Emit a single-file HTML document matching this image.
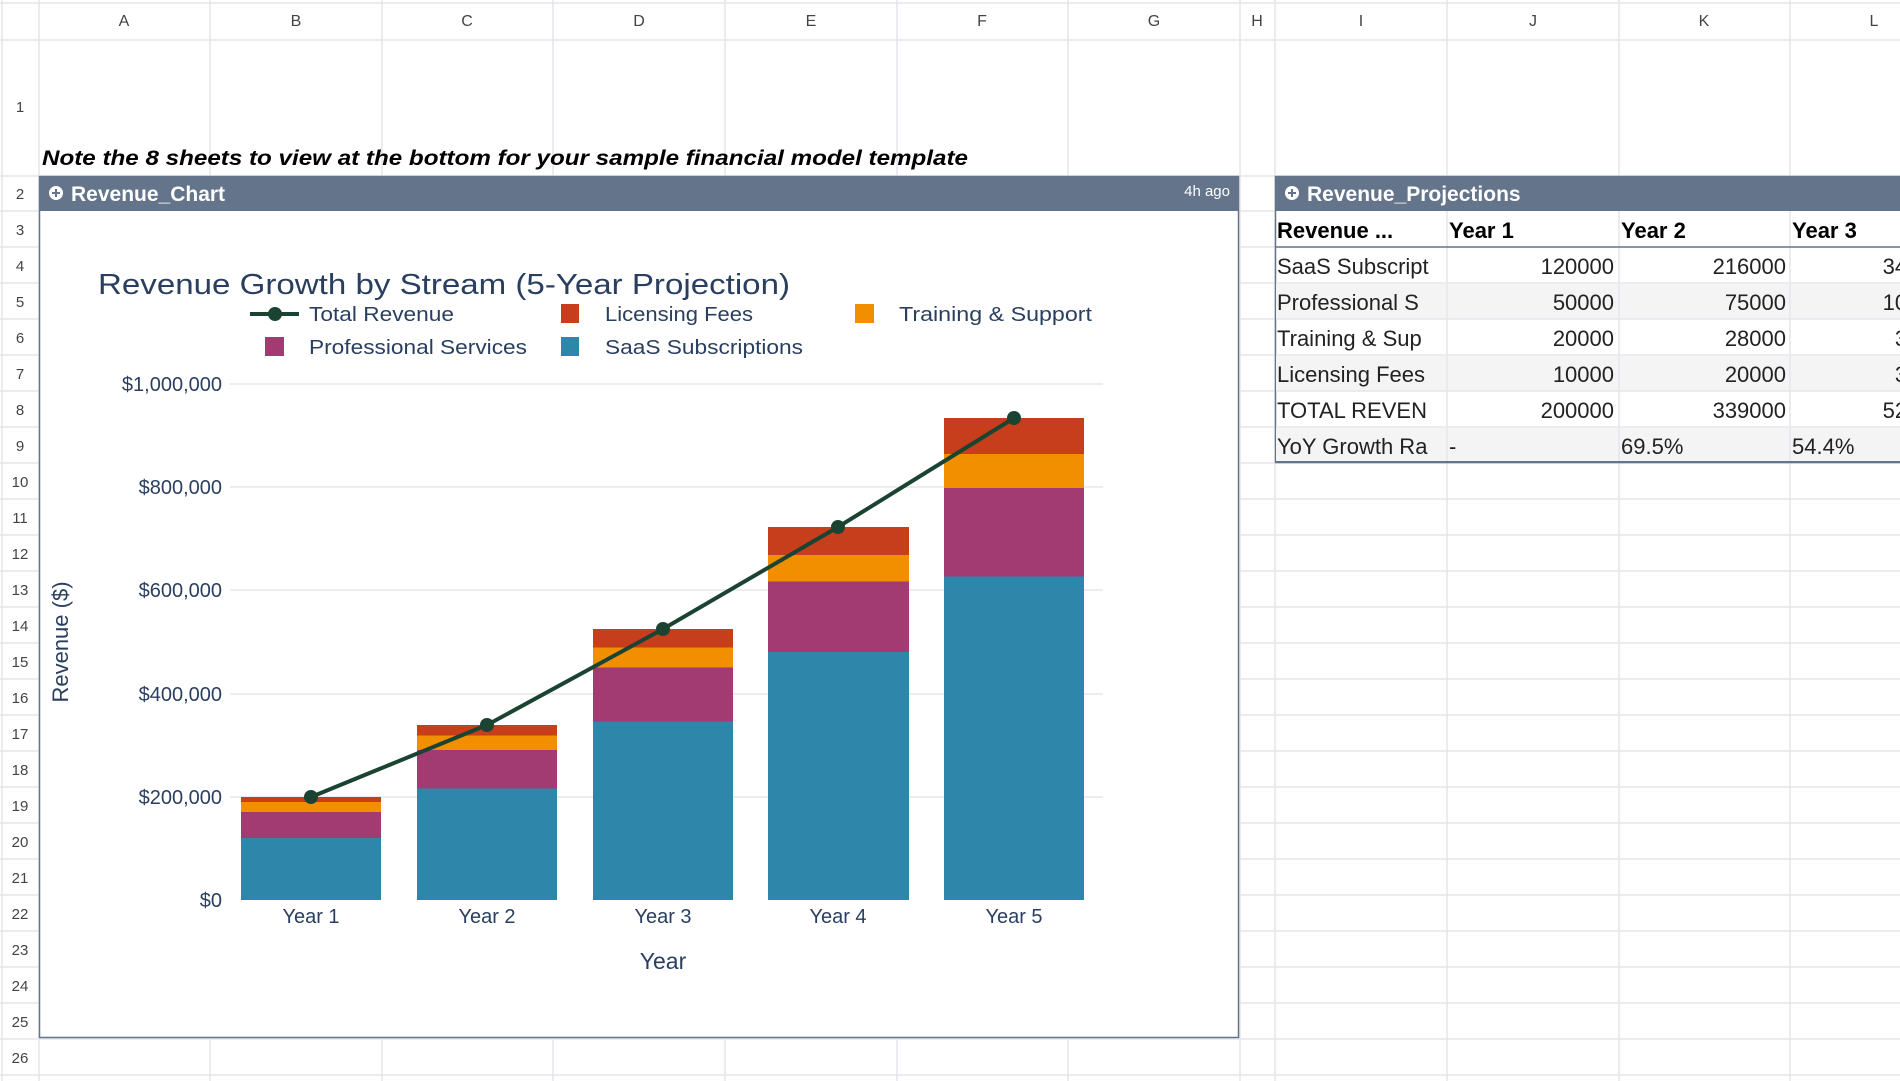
<!DOCTYPE html>
<html><head><meta charset="utf-8"><style>
html,body{margin:0;padding:0;background:#fff;width:1900px;height:1081px;overflow:hidden}
svg{display:block}
text{font-family:"Liberation Sans",sans-serif}
</style></head><body>
<svg width="1900" height="1081" viewBox="0 0 1900 1081" xmlns="http://www.w3.org/2000/svg">
<rect width="1900" height="1081" fill="#fff"/>
<g stroke="#e3e6eb" stroke-width="1.5">
<line x1="0" y1="3" x2="1900" y2="3"/>
<line x1="0" y1="40" x2="1900" y2="40"/>
<line x1="0" y1="176" x2="1900" y2="176"/>
<line x1="0" y1="211" x2="1900" y2="211"/>
<line x1="0" y1="247" x2="1900" y2="247"/><line x1="0" y1="283" x2="1900" y2="283"/><line x1="0" y1="319" x2="1900" y2="319"/><line x1="0" y1="355" x2="1900" y2="355"/><line x1="0" y1="391" x2="1900" y2="391"/><line x1="0" y1="427" x2="1900" y2="427"/><line x1="0" y1="463" x2="1900" y2="463"/><line x1="0" y1="499" x2="1900" y2="499"/><line x1="0" y1="535" x2="1900" y2="535"/><line x1="0" y1="571" x2="1900" y2="571"/><line x1="0" y1="607" x2="1900" y2="607"/><line x1="0" y1="643" x2="1900" y2="643"/><line x1="0" y1="679" x2="1900" y2="679"/><line x1="0" y1="715" x2="1900" y2="715"/><line x1="0" y1="751" x2="1900" y2="751"/><line x1="0" y1="787" x2="1900" y2="787"/><line x1="0" y1="823" x2="1900" y2="823"/><line x1="0" y1="859" x2="1900" y2="859"/><line x1="0" y1="895" x2="1900" y2="895"/><line x1="0" y1="931" x2="1900" y2="931"/><line x1="0" y1="967" x2="1900" y2="967"/><line x1="0" y1="1003" x2="1900" y2="1003"/><line x1="0" y1="1039" x2="1900" y2="1039"/><line x1="0" y1="1075" x2="1900" y2="1075"/>
<line x1="2" y1="0" x2="2" y2="1081"/>
<line x1="39" y1="0" x2="39" y2="1081"/><line x1="210" y1="0" x2="210" y2="1081"/><line x1="382" y1="0" x2="382" y2="1081"/><line x1="553" y1="0" x2="553" y2="1081"/><line x1="725" y1="0" x2="725" y2="1081"/><line x1="897" y1="0" x2="897" y2="1081"/><line x1="1068" y1="0" x2="1068" y2="1081"/><line x1="1240" y1="0" x2="1240" y2="1081"/><line x1="1275" y1="0" x2="1275" y2="1081"/><line x1="1447" y1="0" x2="1447" y2="1081"/><line x1="1619" y1="0" x2="1619" y2="1081"/><line x1="1790" y1="0" x2="1790" y2="1081"/>
</g>
<g font-size="16" fill="#444" text-anchor="middle">
<text x="124" y="26">A</text><text x="296" y="26">B</text><text x="467" y="26">C</text><text x="639" y="26">D</text><text x="811" y="26">E</text><text x="982" y="26">F</text><text x="1154" y="26">G</text><text x="1257" y="26">H</text><text x="1361" y="26">I</text><text x="1533" y="26">J</text><text x="1704" y="26">K</text><text x="1874" y="26">L</text>
</g>
<g font-size="15" fill="#444" text-anchor="middle">
<text x="20" y="112">1</text><text x="20" y="199">2</text>
<text x="20" y="235">3</text><text x="20" y="271">4</text><text x="20" y="307">5</text><text x="20" y="343">6</text><text x="20" y="379">7</text><text x="20" y="415">8</text><text x="20" y="451">9</text><text x="20" y="487">10</text><text x="20" y="523">11</text><text x="20" y="559">12</text><text x="20" y="595">13</text><text x="20" y="631">14</text><text x="20" y="667">15</text><text x="20" y="703">16</text><text x="20" y="739">17</text><text x="20" y="775">18</text><text x="20" y="811">19</text><text x="20" y="847">20</text><text x="20" y="883">21</text><text x="20" y="919">22</text><text x="20" y="955">23</text><text x="20" y="991">24</text><text x="20" y="1027">25</text><text x="20" y="1063">26</text>
</g>
<text x="42" y="165" font-size="21.5" font-weight="bold" font-style="italic" fill="#000" textLength="926" lengthAdjust="spacingAndGlyphs">Note the 8 sheets to view at the bottom for your sample financial model template</text>

<rect x="39.5" y="176.5" width="1199" height="861" fill="#fff" stroke="#64748b" stroke-width="1.5"/>
<rect x="39" y="176" width="1200" height="35" fill="#64748b"/>
<circle cx="56" cy="193" r="7" fill="#fff"/><path d="M52 193h8M56 189v8" stroke="#64748b" stroke-width="2"/>
<text x="71" y="201" font-size="21" font-weight="bold" fill="#fff">Revenue_Chart</text>
<text x="1230" y="196" font-size="15" fill="#fff" text-anchor="end">4h ago</text>

<text x="98" y="294" font-size="29" fill="#2a3f5f" textLength="692" lengthAdjust="spacingAndGlyphs">Revenue Growth by Stream (5-Year Projection)</text>
<line x1="250" y1="314" x2="299" y2="314" stroke="#1b4332" stroke-width="4"/><circle cx="275" cy="314" r="7" fill="#1b4332"/>
<g font-size="20" fill="#2a3f5f">
<text x="309" y="321" textLength="145" lengthAdjust="spacingAndGlyphs">Total Revenue</text>
<rect x="561" y="304" width="18" height="19" fill="#c73e1d"/><text x="605" y="321" textLength="148" lengthAdjust="spacingAndGlyphs">Licensing Fees</text>
<rect x="855" y="304" width="19" height="19" fill="#f18f01"/><text x="899" y="321" textLength="193" lengthAdjust="spacingAndGlyphs">Training &amp; Support</text>
<rect x="265" y="337" width="19" height="19" fill="#a23b72"/><text x="309" y="354" textLength="218" lengthAdjust="spacingAndGlyphs">Professional Services</text>
<rect x="561" y="337" width="18" height="19" fill="#2e86ab"/><text x="605" y="354" textLength="198" lengthAdjust="spacingAndGlyphs">SaaS Subscriptions</text>
</g>
<g stroke="#e5e7eb" stroke-width="1.5">
<line x1="230" y1="384" x2="1103" y2="384"/><line x1="230" y1="487" x2="1103" y2="487"/><line x1="230" y1="590" x2="1103" y2="590"/><line x1="230" y1="694" x2="1103" y2="694"/><line x1="230" y1="797" x2="1103" y2="797"/>
</g>
<g font-size="20" fill="#2a3f5f" text-anchor="end">
<text x="222" y="391">$1,000,000</text><text x="222" y="494">$800,000</text><text x="222" y="597">$600,000</text><text x="222" y="701">$400,000</text><text x="222" y="804">$200,000</text><text x="222" y="907">$0</text>
</g>
<text transform="translate(68,642) rotate(-90)" font-size="22" fill="#2a3f5f" text-anchor="middle">Revenue ($)</text>
<g>
<rect x="241" y="838" width="140" height="62" fill="#2e86ab"/><rect x="241" y="812" width="140" height="26" fill="#a23b72"/><rect x="241" y="802" width="140" height="10" fill="#f18f01"/><rect x="241" y="797" width="140" height="5" fill="#c73e1d"/>
<rect x="417" y="788.5" width="140" height="111.5" fill="#2e86ab"/><rect x="417" y="750" width="140" height="38.5" fill="#a23b72"/><rect x="417" y="735.5" width="140" height="14.5" fill="#f18f01"/><rect x="417" y="725" width="140" height="10.5" fill="#c73e1d"/>
<rect x="593" y="721.5" width="140" height="178.5" fill="#2e86ab"/><rect x="593" y="667.5" width="140" height="54" fill="#a23b72"/><rect x="593" y="647.5" width="140" height="20" fill="#f18f01"/><rect x="593" y="629" width="140" height="18.5" fill="#c73e1d"/>
<rect x="768" y="652" width="141" height="248" fill="#2e86ab"/><rect x="768" y="581.5" width="141" height="70.5" fill="#a23b72"/><rect x="768" y="555" width="141" height="26.5" fill="#f18f01"/><rect x="768" y="527" width="141" height="28" fill="#c73e1d"/>
<rect x="944" y="576.5" width="140" height="323.5" fill="#2e86ab"/><rect x="944" y="488" width="140" height="88.5" fill="#a23b72"/><rect x="944" y="454" width="140" height="34" fill="#f18f01"/><rect x="944" y="418" width="140" height="36" fill="#c73e1d"/>
</g>
<polyline points="311,797 487,725 663,629 838,527 1014,418" fill="none" stroke="#1b4332" stroke-width="4"/>
<g fill="#1b4332"><circle cx="311" cy="797" r="7"/><circle cx="487" cy="725" r="7"/><circle cx="663" cy="629" r="7"/><circle cx="838" cy="527" r="7"/><circle cx="1014" cy="418" r="7"/></g>
<g font-size="20" fill="#2a3f5f" text-anchor="middle">
<text x="311" y="923">Year 1</text><text x="487" y="923">Year 2</text><text x="663" y="923">Year 3</text><text x="838" y="923">Year 4</text><text x="1014" y="923">Year 5</text>
</g>
<text x="663" y="969" font-size="23" fill="#2a3f5f" text-anchor="middle">Year</text>

<rect x="1275.5" y="176.5" width="630" height="286" fill="#fff" stroke="#64748b" stroke-width="1.5"/>
<rect x="1275" y="176" width="625" height="35" fill="#64748b"/>
<circle cx="1292" cy="193" r="7" fill="#fff"/><path d="M1288 193h8M1292 189v8" stroke="#64748b" stroke-width="2"/>
<text x="1307" y="201" font-size="21" font-weight="bold" fill="#fff">Revenue_Projections</text>
<rect x="1276" y="283" width="624" height="36" fill="#f4f4f4"/>
<rect x="1276" y="355" width="624" height="36" fill="#f4f4f4"/>
<rect x="1276" y="427" width="624" height="35" fill="#f4f4f4"/>
<g stroke="#e3e6eb" stroke-width="1.5">
<line x1="1276" y1="283" x2="1900" y2="283"/><line x1="1276" y1="319" x2="1900" y2="319"/><line x1="1276" y1="355" x2="1900" y2="355"/><line x1="1276" y1="391" x2="1900" y2="391"/><line x1="1276" y1="427" x2="1900" y2="427"/>
<line x1="1447" y1="211" x2="1447" y2="462"/><line x1="1619" y1="211" x2="1619" y2="462"/><line x1="1790" y1="211" x2="1790" y2="462"/>
</g>
<line x1="1276" y1="247" x2="1900" y2="247" stroke="#64748b" stroke-width="1.5"/>
<line x1="1276" y1="462" x2="1900" y2="462" stroke="#64748b" stroke-width="2"/>
<g font-size="22" font-weight="bold" fill="#000">
<text x="1277" y="238">Revenue ...</text><text x="1449" y="238">Year 1</text><text x="1621" y="238">Year 2</text><text x="1792" y="238">Year 3</text>
</g>
<g font-size="22" fill="#222">
<text x="1277" y="274">SaaS Subscript</text><text x="1277" y="310">Professional S</text><text x="1277" y="346">Training &amp; Sup</text><text x="1277" y="382">Licensing Fees</text><text x="1277" y="418">TOTAL REVEN</text><text x="1277" y="454">YoY Growth Ra</text>
<text x="1449" y="454">-</text><text x="1621" y="454">69.5%</text><text x="1792" y="454">54.4%</text>
</g>
<g font-size="22" fill="#222" text-anchor="end">
<text x="1614" y="274">120000</text><text x="1614" y="310">50000</text><text x="1614" y="346">20000</text><text x="1614" y="382">10000</text><text x="1614" y="418">200000</text>
<text x="1786" y="274">216000</text><text x="1786" y="310">75000</text><text x="1786" y="346">28000</text><text x="1786" y="382">20000</text><text x="1786" y="418">339000</text>
<text x="1956" y="274">345600</text><text x="1956" y="310">105000</text><text x="1956" y="346">39200</text><text x="1956" y="382">35000</text><text x="1956" y="418">524800</text>
</g>
</svg>
</body></html>
